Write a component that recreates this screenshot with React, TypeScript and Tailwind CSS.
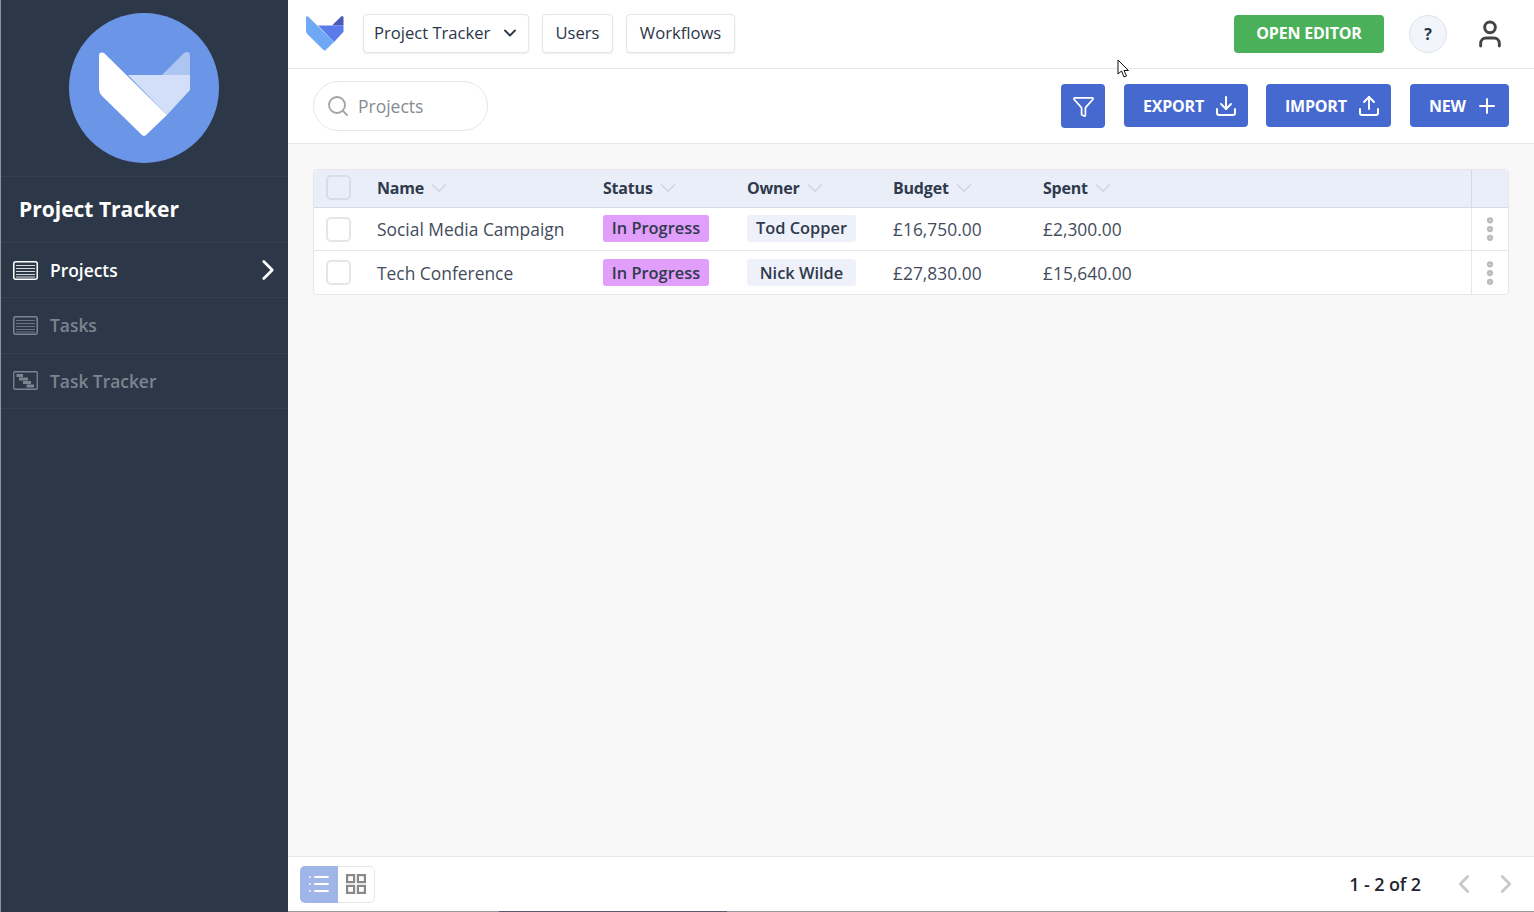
import { ChevronDown, ChevronRight, ChevronLeft, Search, Filter, Download, Upload, Plus, User, List, MoreVertical } from "lucide-react";

const font = { fontFamily: '"Open Sans", sans-serif' };

function FoxLogo({ className, solid }: { className?: string; solid?: boolean }) {
  return (
    <svg viewBox="0 0 92 85" className={className}>
      <path d="M63 23 L85 1 Q91 -2 91 4 L91 23 Z" fill={solid ? "#4a5bb5" : "#ffffff"} opacity={solid ? 1 : 0.45} />
      <path d="M29 23 L91 23 L91 38 L68 63 Z" fill={solid ? "#5b7bea" : "#ffffff"} opacity={solid ? 1 : 0.7} />
      <path d="M0 4 Q0 -1 5 1 L68 63 L47 83 Q45 85 43 83 L3 44 Q0 41 0 37 Z" fill={solid ? "#6fa8f5" : "#ffffff"} />
    </svg>
  );
}

function ListIcon({ className }: { className?: string }) {
  return (
    <svg viewBox="0 0 25 19" fill="none" stroke="currentColor" className={className}>
      <rect x="0.75" y="0.75" width="23.5" height="17.5" rx="2" strokeWidth="1.5" />
      <path d="M3 4.5h19M3 7.5h19M3 10.5h19M3 13.5h19M3 16h19" strokeWidth="1" opacity=".8" />
    </svg>
  );
}

function GanttIcon({ className }: { className?: string }) {
  return (
    <svg viewBox="0 0 25 19" fill="none" stroke="currentColor" className={className}>
      <rect x="0.75" y="0.75" width="23.5" height="17.5" rx="1" strokeWidth="1.3" />
      <path d="M3.5 4.5h6.5M6 8h9M10 11.5h8M13.5 15h7.5" strokeWidth="2.8" />
    </svg>
  );
}

function SideItem({ label, icon, active }: { label: string; icon: React.ReactNode; active?: boolean }) {
  return (
    <div className={`flex items-center h-[55.33px] border-b border-[#33404f] pl-[12px] pr-[3px] ${active ? "text-white" : "text-[#7c8490]"}`}>
      <span className="w-[25px] mr-[12px] flex">{icon}</span>
      <span className="flex-1 text-[17.4px] font-semibold">{label}</span>
      {active && <ChevronRight size={34} strokeWidth={1.9} className="text-white" />}
    </div>
  );
}

function NavButton({ children, className = "" }: { children: React.ReactNode; className?: string }) {
  return (
    <div className={`h-[39px] mb-[2px] flex items-center rounded border border-[#e6e6e6] bg-white shadow-[0_1px_2px_rgba(0,0,0,0.08)] text-[16.6px] text-[#2b3648] ${className}`}>
      {children}
    </div>
  );
}

function ActionButton({ label, icon, className = "" }: { label: string; icon: React.ReactNode; className?: string }) {
  return (
    <div className={`h-[43px] mb-[1px] flex items-center rounded bg-[#4669d0] text-white font-bold text-[16px] tracking-[-0.2px] ${className}`}>
      {label}
      {icon}
    </div>
  );
}

function Check({ header }: { header?: boolean }) {
  return <div className={`w-[25px] h-[25px] rounded-[5px] border-2 ${header ? "border-[#d8dce6]" : "border-[#e6e6e6] bg-white"}`} />;
}

function Head({ label, className }: { label: string; className: string }) {
  return (
    <div className={`flex items-center gap-[2px] mb-[2px] font-bold text-[16px] text-[#2f3a4c] tracking-[-0.2px] ${className}`}>
      {label}
      <ChevronDown size={26} strokeWidth={1.2} className="text-[#cdd2dc]" />
    </div>
  );
}

const rows = [
  { name: "Social Media Campaign", owner: "Tod Copper", budget: "£16,750.00", spent: "£2,300.00" },
  { name: "Tech Conference", owner: "Nick Wilde", budget: "£27,830.00", spent: "£15,640.00" },
];

export default function App() {
  return (
    <div className="relative flex h-[912px] w-[1534px] overflow-hidden bg-white" style={font}>
      <aside className="w-[288px] shrink-0 h-full bg-[#2c3848] border-l border-[#8a929c] flex flex-col">
        <div className="h-[177px] border-b border-[#33404f] flex justify-center pt-[13px] pr-[1px]">
          <div className="w-[150px] h-[150px] rounded-full bg-[#6b95e6] flex items-center justify-center">
            <FoxLogo className="w-[92px] h-[85px] ml-[2px] mt-[13px]" />
          </div>
        </div>
        <div className="h-[66px] border-b border-[#33404f] flex items-center pl-[18px] text-white font-bold text-[21px]">
          Project Tracker
        </div>
        <SideItem label="Projects" active icon={<ListIcon className="w-[25px] h-[19px]" />} />
        <SideItem label="Tasks" icon={<ListIcon className="w-[25px] h-[19px]" />} />
        <SideItem label="Task Tracker" icon={<GanttIcon className="w-[25px] h-[19px]" />} />
      </aside>

      <main className="flex-1 flex flex-col h-full bg-[#f8f8f8] border-b border-[#9a9a9a]">
        <header className="h-[69px] shrink-0 bg-white border-b border-[#e6e6e6] flex items-center pl-[18px] pr-[28px]">
          <FoxLogo solid className="w-[38px] h-[35px] mr-[19px] mb-[2px]" />
          <NavButton className="w-[166px] pl-[10px] pr-[8px] justify-between mr-[13px]">
            Project Tracker
            <ChevronDown size={20} strokeWidth={2.2} className="text-[#2b3648]" />
          </NavButton>
          <NavButton className="w-[71px] justify-center mr-[13px]">Users</NavButton>
          <NavButton className="w-[109px] justify-center">Workflows</NavButton>
          <div className="ml-auto h-[38px] w-[150px] pb-[2px] rounded bg-[#4bb05a] text-white font-bold text-[16px] tracking-[-0.2px] flex items-center justify-center">
            OPEN EDITOR
          </div>
          <div className="ml-[25px] w-[38px] h-[38px] rounded-full bg-[#f3f5fc] border border-[#e0e2e8] flex items-center justify-center font-bold text-[16px] text-[#2b3648]">
            ?
          </div>
          <User size={32} strokeWidth={2.2} className="ml-[27px] mb-[1px] text-[#444]" />
        </header>

        <div className="h-[75px] shrink-0 bg-white border-b border-[#e6e6e6] flex items-center pl-[25px] pr-[25px]">
          <div className="w-[175px] h-[50px] rounded-full border border-[#e6e6e6] flex items-center pl-[12px] text-[17.5px] text-[#868b94]">
            <Search size={24} strokeWidth={1.8} className="text-[#a3a3a3] mr-[8px]" />
            Projects
          </div>
          <div className="ml-auto w-[44px] h-[44px] rounded bg-[#4669d0] flex items-center justify-center text-white mr-[19px]">
            <Filter size={23} strokeWidth={1.8} />
          </div>
          <ActionButton label="EXPORT" className="w-[124px] pl-[19px] mr-[18px]" icon={<Download size={24} strokeWidth={2} className="ml-[10px]" />} />
          <ActionButton label="IMPORT" className="w-[125px] pl-[19px] mr-[19px]" icon={<Upload size={24} strokeWidth={2} className="ml-[10px]" />} />
          <ActionButton label="NEW" className="w-[99px] pl-[19px]" icon={<Plus size={24} strokeWidth={2} className="ml-[9px]" />} />
        </div>

        <div className="flex-1 px-[25px] pt-[25px]">
          <div className="rounded border border-[#e6e6e6] bg-white overflow-hidden">
            <div className="h-[38px] flex items-center bg-[#eaeef9] border-b border-[#d5d9e6]">
              <div className="w-[63px] pl-[12px] mb-[2px]"><Check header /></div>
              <Head label="Name" className="w-[226px]" />
              <Head label="Status" className="w-[144px]" />
              <Head label="Owner" className="w-[146px]" />
              <Head label="Budget" className="w-[150px]" />
              <Head label="Spent" className="flex-1" />
              <div className="w-[37px] h-full border-l border-[#d5d9e6]" />
            </div>
            {rows.map((r, i) => {
              // second row has no divider, its text sits a pixel lower
              const textShift = i === 1 ? "pt-[2px]" : "";
              const pillShift = i === 0 ? "mb-[1px]" : "pt-[1px]";
              return (
                <div key={r.name} className={`h-[43px] flex items-center text-[17.4px] text-[#444c5c] ${i === 0 ? "border-b border-[#e6e6e6]" : ""}`}>
                  <div className="w-[63px] pl-[12px]"><Check /></div>
                  <div className={`w-[226px] ${textShift}`}>{r.name}</div>
                  <div className="w-[144px] flex">
                    <span className={`flex items-center justify-center h-[27px] w-[106px] rounded-[3px] bg-[#e19ffb] text-[#2f3a4c] font-semibold text-[16.4px] ${pillShift}`}>
                      In Progress
                    </span>
                  </div>
                  <div className="w-[146px] flex">
                    <span className={`flex items-center justify-center h-[27px] w-[109px] rounded-[3px] bg-[#eef1fa] text-[#2f3a4c] font-semibold text-[16.4px] ${pillShift}`}>
                      {r.owner}
                    </span>
                  </div>
                  <div className={`w-[150px] ${textShift}`}>{r.budget}</div>
                  <div className={`flex-1 ${textShift}`}>{r.spent}</div>
                  <div className="w-[37px] h-full border-l border-[#e6e6e6] flex items-center justify-center">
                    <MoreVertical size={30} strokeWidth={3} className="text-[#bbbbbb]" />
                  </div>
                </div>
              );
            })}
          </div>
        </div>

        <footer className="h-[55px] shrink-0 bg-white border-t border-[#e6e6e6] flex items-center pl-[12px] pr-[13px]">
          <div className="h-[37px] w-[75px] flex rounded-[5px] overflow-hidden">
            <div className="w-[38px] bg-[#a0b6e8] flex items-center justify-center text-white">
              <List size={24} strokeWidth={1.8} />
            </div>
            <div className="flex-1 flex items-center justify-center border border-l-0 border-[#e6e6e6] rounded-r-[5px]">
              <svg viewBox="0 0 20 20" className="w-[20px] h-[20px]" fill="none" stroke="#888" strokeWidth="2.2">
                <rect x="1.1" y="1.1" width="7" height="7" />
                <rect x="11.9" y="1.1" width="7" height="7" />
                <rect x="1.1" y="11.9" width="7" height="7" />
                <rect x="11.9" y="11.9" width="7" height="7" />
              </svg>
            </div>
          </div>
          <span className="ml-auto font-semibold text-[18px] text-[#1f2530] tracking-[-0.1px]">1 - 2 of 2</span>
          <ChevronLeft size={30} strokeWidth={2.2} className="ml-[28px] text-[#c8c8c8]" />
          <ChevronRight size={30} strokeWidth={2.2} className="ml-[12px] text-[#c8c8c8]" />
        </footer>
      </main>

      {/* mouse pointer sitting over the page */}
      <svg viewBox="0 0 13 20" className="absolute left-[1117px] top-[59px] w-[13px] h-[20px]">
        <path d="M1 1 L1 15 L4.5 12 L7 18 L9.5 17 L7 11.5 L11.5 11.5 Z" fill="#fff" stroke="#111" strokeWidth="1" />
      </svg>
      {/* sliver of another window at the bottom edge */}
      <div className="absolute left-[499px] bottom-0 w-[228px] h-[1px] bg-[#555a70]" />
    </div>
  );
}
